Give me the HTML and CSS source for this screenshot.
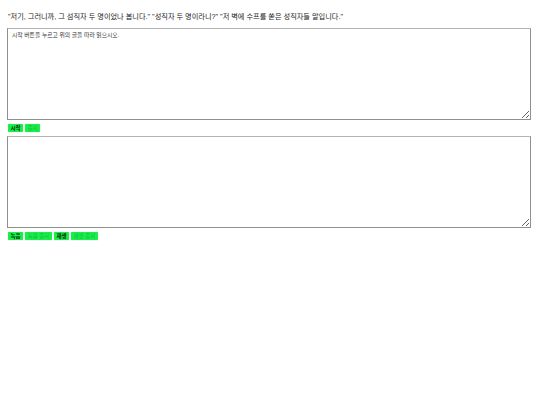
FILE: index.html
```html
<!DOCTYPE html>
<html lang="ko">
<head>
<meta charset="utf-8">
<link rel="stylesheet" href="styles.css">
</head>
<body>
<p class="phrase">"저기, 그러니까, 그 섬직자 두 명이었나 봅니다." "성직자 두 명이라니?" "저 벽에 수프를 쏟은 성직자들 말입니다."</p>
<textarea class="box" placeholder="시작 버튼을 누르고 위의 글을 따라 읽으시오."></textarea>
<div class="controls">
  <button class="btn">시작</button>
  <button class="btn" disabled>중지</button>
</div>
<textarea class="box"></textarea>
<div class="controls">
  <button class="btn">녹음</button>
  <button class="btn" disabled>녹음 중지</button>
  <button class="btn">재생</button>
  <button class="btn" disabled>재생 중지</button>
</div>
</body>
</html>
```
FILE: styles.css
```css
html, body {
  margin: 0;
  background: #fff;
}
body {
  padding: 0 9px 0 7px;
  font-family: "Liberation Sans", "Noto Sans CJK KR", sans-serif;
  color: #222;
}
.phrase {
  margin: 0;
  padding: 13px 0 0 1px;
  height: 15px;
  font-size: 7.2px;
  line-height: 8px;
}
.box {
  display: block;
  box-sizing: border-box;
  width: 524px;
  height: 92px;
  margin: 0;
  padding: 3px 4px;
  border: 1px solid #8f8f8f;
  border-top-color: #b5b5b5;
  font-family: "Liberation Sans", "Noto Sans CJK KR", sans-serif;
  font-size: 5.8px;
  line-height: 7px;
  resize: vertical;
  outline: none;
}
.box::placeholder {
  color: #333;
}
.controls {
  display: flex;
  gap: 2px;
  padding: 4px 0 4px 1px;
}
.btn {
  margin: 0;
  padding: 0 2.5px;
  height: 8px;
  border: none;
  border-radius: 1px;
  background: #1aee4a;
  color: #0a2a10;
  font-family: "Liberation Sans", "Noto Sans CJK KR", sans-serif;
  font-size: 5.5px;
  font-weight: bold;
  line-height: 8px;
  box-shadow: 0 0 1px #4df070;
}
.btn:disabled {
  color: #10c040;
  font-weight: normal;
}
```
